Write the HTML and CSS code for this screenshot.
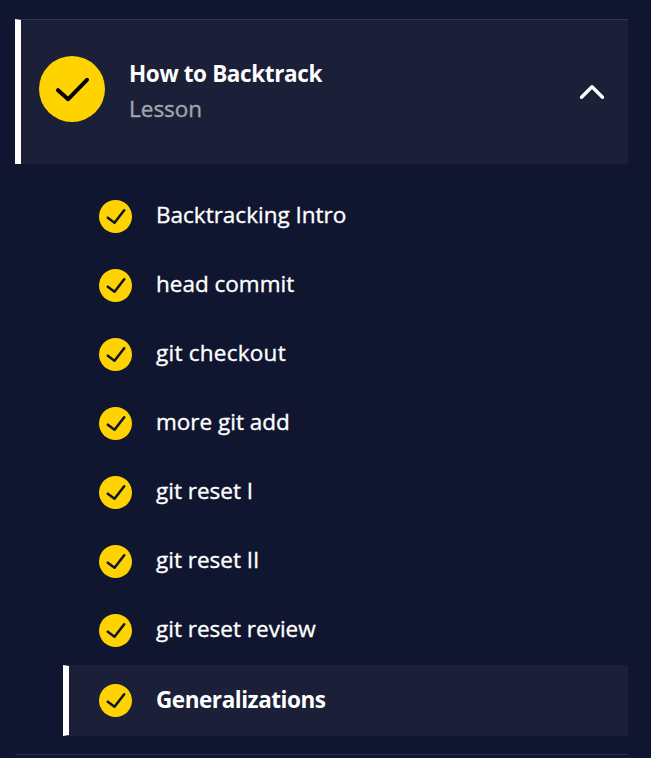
FILE: index.html
```html
<!DOCTYPE html>
<html lang="en">
<head>
<meta charset="utf-8">
<title>How to Backtrack</title>
<link rel="stylesheet" href="styles.css">
</head>
<body>
<svg class="defs" aria-hidden="true">
  <symbol id="done" viewBox="0 0 33 33"><circle cx="16.5" cy="16.5" r="16.5" fill="#ffd300"/><path d="M8.8 17.7 15.5 22.7 25.2 10.3" fill="none" stroke="currentColor" stroke-width="2.6" stroke-linecap="round" stroke-linejoin="round"/></symbol>
</svg>
<main class="syllabus">
  <header class="lesson">
    <svg class="lesson-icon" viewBox="0 0 66 66"><circle cx="33" cy="33" r="33" fill="#ffd300"/><path d="M19 34.2 29.2 43.2 48 23.8" fill="none" stroke="#000" stroke-width="4" stroke-linecap="round" stroke-linejoin="round"/></svg>
    <div class="lesson-text">
      <h1 class="title">How to Backtrack</h1>
      <p class="kind">Lesson</p>
    </div>
    <svg class="chevron" viewBox="0 0 26 16"><path d="M2.5 13.2 13 2.7 23.5 13.2" fill="none" stroke="#fff" stroke-width="3.4" stroke-linecap="round" stroke-linejoin="round"/></svg>
  </header>
  <ul class="items">
    <li class="item"><svg class="icon"><use href="#done"/></svg><span>Backtracking Intro</span></li>
    <li class="item"><svg class="icon"><use href="#done"/></svg><span>head commit</span></li>
    <li class="item"><svg class="icon"><use href="#done"/></svg><span class="wide">git checkout</span></li>
    <li class="item"><svg class="icon"><use href="#done"/></svg><span>more git add</span></li>
    <li class="item"><svg class="icon"><use href="#done"/></svg><span>git reset I</span></li>
    <li class="item"><svg class="icon"><use href="#done"/></svg><span>git reset II</span></li>
    <li class="item"><svg class="icon"><use href="#done"/></svg><span>git reset review</span></li>
    <li class="item active"><svg class="icon"><use href="#done"/></svg><span>Generalizations</span></li>
  </ul>
</main>
</body>
</html>
```
FILE: styles.css
```css
* { box-sizing: border-box; }
body {
  margin: 0;
  height: 758px;
  overflow: hidden;
  background: #10162f;
  color: #fff;
  font: 22.5px/36px "Open Sans", sans-serif;
  -webkit-text-stroke: 0.35px;
}
.defs { display: none; }
.syllabus {
  margin: 19px 23px 0 15px;
  height: 736px;
  border-bottom: 1px solid #292e45;
}
.lesson {
  display: flex;
  align-items: flex-start;
  height: 145px;
  padding: 36px 23px 0 18px;
  border-top: 1px solid #31364c;
  border-left: 6px solid #fff;
  background: #1b1f37;
}
.lesson-icon { width: 66px; height: 66px; flex: none; }
.lesson-text { flex: 1; margin-left: 24px; }
.title, .kind { margin: 0; font-size: inherit; white-space: nowrap; }
.title { height: 35px; font-weight: 700; letter-spacing: -0.38px; }
.kind { color: #a4a5ae; }
.chevron { width: 26px; height: 16px; margin-top: 28px; }
.items { list-style: none; margin: 0; padding: 18px 0 0 48px; }
.item {
  display: flex;
  align-items: center;
  gap: 24px;
  height: 69px;
  padding-left: 36px;
  white-space: nowrap;
}
.item span { padding-bottom: 4px; }
.item .wide { letter-spacing: 0.25px; }
.icon { width: 33px; height: 33px; color: #10162f; }
.active {
  height: 71px;
  padding-left: 30px;
  border: 1px solid transparent;
  border-width: 1px 0 1px 6px;
  border-left-color: #fff;
  background: #1b1f37;
  font-weight: 700;
  letter-spacing: -0.45px;
}
.title, .active { -webkit-text-stroke: 0; }
.active span { padding-bottom: 2px; }
```
